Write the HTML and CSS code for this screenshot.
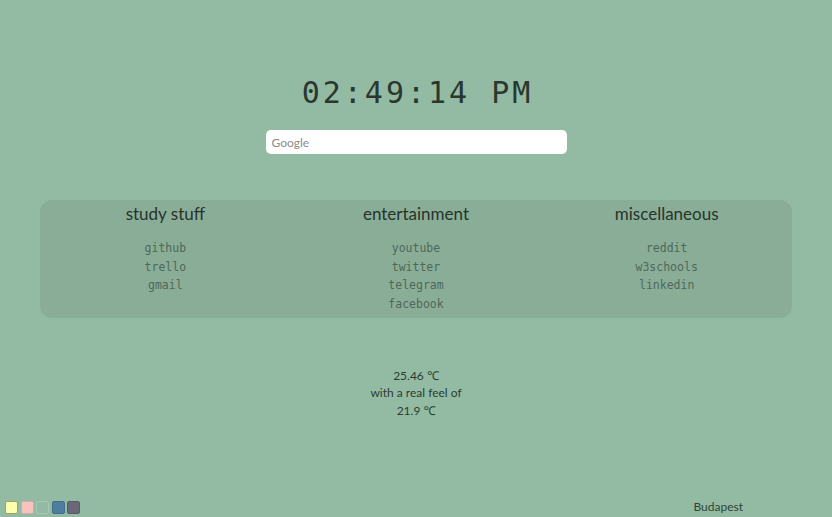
FILE: index.html
```html
<!DOCTYPE html>
<html lang="en">
<head>
<meta charset="utf-8">
<title>Start page</title>
<link rel="stylesheet" href="styles.css">
</head>
<body>
<main class="page">
  <div class="clock">02:49:14 PM</div>
  <form class="search">
    <input class="search-input" type="text" placeholder="Google">
  </form>
  <section class="links">
    <div class="col">
      <h2 class="col-title">study stuff</h2>
      <ul class="col-list">
        <li><a href="#">github</a></li>
        <li><a href="#">trello</a></li>
        <li><a href="#">gmail</a></li>
      </ul>
    </div>
    <div class="col">
      <h2 class="col-title">entertainment</h2>
      <ul class="col-list">
        <li><a href="#">youtube</a></li>
        <li><a href="#">twitter</a></li>
        <li><a href="#">telegram</a></li>
        <li><a href="#">facebook</a></li>
      </ul>
    </div>
    <div class="col">
      <h2 class="col-title">miscellaneous</h2>
      <ul class="col-list">
        <li><a href="#">reddit</a></li>
        <li><a href="#">w3schools</a></li>
        <li><a href="#">linkedin</a></li>
      </ul>
    </div>
  </section>
  <div class="weather">
    <div>25.46 ℃</div>
    <div>with a real feel of</div>
    <div>21.9 ℃</div>
  </div>
  <footer class="footer">
    <div class="swatches">
      <span class="swatch sw-yellow"></span>
      <span class="swatch sw-pink"></span>
      <span class="swatch sw-green"></span>
      <span class="swatch sw-blue"></span>
      <span class="swatch sw-gray"></span>
    </div>
    <div class="city">Budapest</div>
  </footer>
</main>
</body>
</html>
```

FILE: styles.css
```css
html, body {
  margin: 0;
  padding: 0;
}
body {
  background: #93bba4;
  font-family: "Lato", "Noto Sans", sans-serif;
  color: #2c3b31;
}
.page {
  min-height: 100vh;
  display: flex;
  flex-direction: column;
  align-items: center;
  box-sizing: border-box;
  padding-top: 73px;
}
.clock {
  font-family: "DejaVu Sans Mono", monospace;
  font-size: 30px;
  line-height: 40px;
  letter-spacing: 3px;
  padding-left: 3px;
  color: #2a372e;
}
.search {
  margin: 17px 0 0;
}
.search-input {
  width: 301px;
  height: 24px;
  box-sizing: border-box;
  border: none;
  border-radius: 5px;
  background: #ffffff;
  padding: 0 6px;
  font-family: "Lato", sans-serif;
  font-size: 12px;
  outline: none;
}
.search-input::placeholder {
  color: #8a8a8a;
}
.links {
  margin-top: 46px;
  width: 752px;
  box-sizing: border-box;
  background: #8aad98;
  border-radius: 12px;
  display: grid;
  grid-template-columns: 1fr 1fr 1fr;
  padding: 2px 0 4px;
}
.col {
  text-align: center;
}
.col-title {
  margin: 0;
  font-weight: 400;
  font-size: 17px;
  line-height: 24px;
  color: #26342b;
}
.col-list {
  list-style: none;
  margin: 12.8px 0 0;
  padding: 0;
}
.col-list li {
  line-height: 18.7px;
  font-size: 11.5px;
}
.col-list a {
  font-family: "DejaVu Sans Mono", monospace;
  color: #4f6858;
  text-decoration: none;
}
.weather {
  margin-top: 49px;
  text-align: center;
  font-size: 12px;
  line-height: 17.5px;
  color: #2c3b31;
}
.footer {
  margin-top: auto;
  align-self: stretch;
  display: flex;
  justify-content: space-between;
  align-items: center;
  padding: 0 89px 3px 5px;
}
.swatches {
  display: flex;
  gap: 2.5px;
  padding-top: 1px;
}
.swatch {
  width: 13px;
  height: 13px;
  box-sizing: border-box;
  border-radius: 2px;
  border: 1px solid rgba(0,0,0,0.18);
}
.sw-yellow { background: #ffffb0; border-color: #a3a35a; }
.sw-pink { background: #f6c3bf; border-color: #d8a8a4; }
.sw-green { background: #93bba4; border-color: #a6c8b4; }
.sw-blue { background: #4d7d9f; border-color: #41708f; }
.sw-gray { background: #6a6877; border-color: #5a5966; }
.city {
  font-size: 12px;
  line-height: 14px;
  color: #2f4436;
}
```
